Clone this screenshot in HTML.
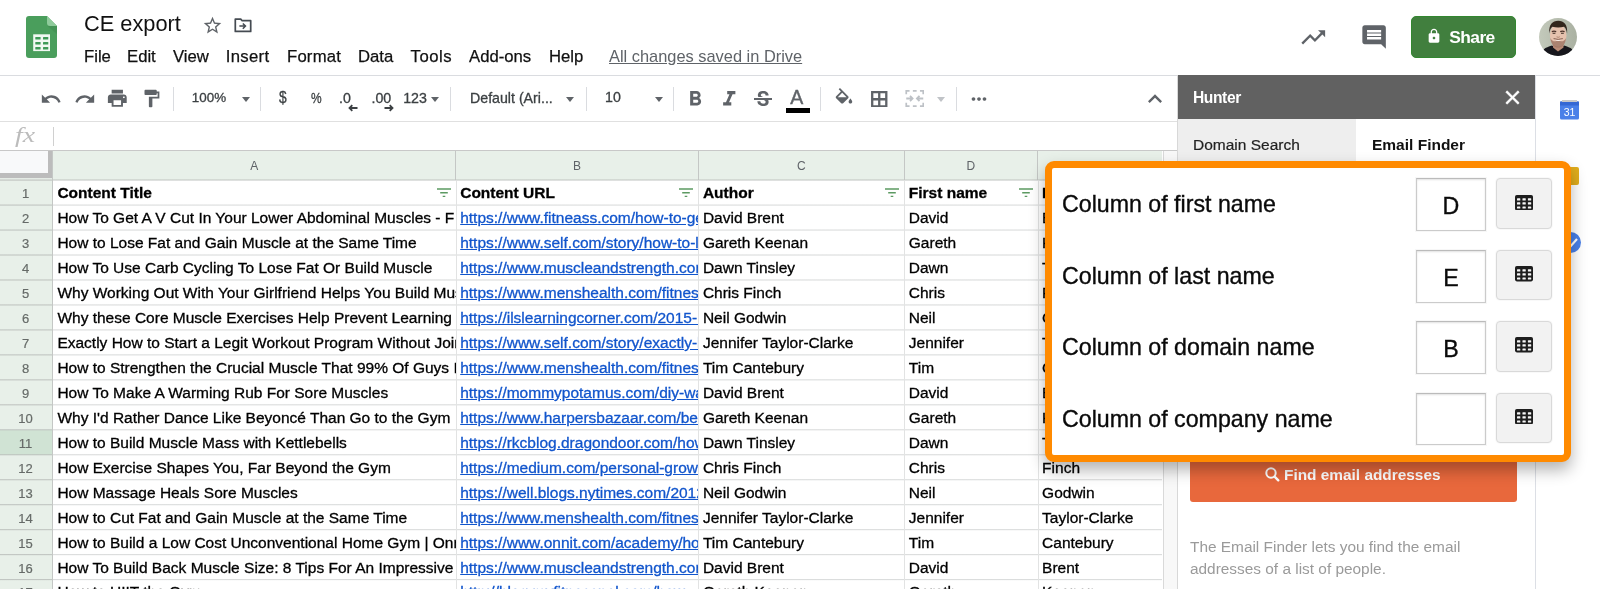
<!DOCTYPE html>
<html><head><meta charset="utf-8"><title>CE export</title>
<style>
html,body{margin:0;padding:0}
body{width:1600px;height:589px;overflow:hidden;position:relative;background:#fff;font-family:"Liberation Sans",sans-serif;color:#000}
.t{position:absolute;white-space:nowrap;line-height:20px;margin-top:-10px}
.ab{position:absolute}
svg{position:absolute;display:block}
/* header */
#hdr{position:absolute;left:0;top:0;width:1600px;height:75px;border-bottom:1px solid #dadce0;background:#fff}
.menu{font-size:16.7px;color:#111;top:56.7px;-webkit-text-stroke:.25px #111}
/* toolbar */
#tb{position:absolute;left:0;top:76px;width:1177px;height:45px;border-bottom:1px solid #e0e0e0;background:#fff}
.sep{position:absolute;top:10.6px;width:1px;height:24px;background:#dadce0}
.tt{font-size:14.2px;color:#3c4043;top:22px;-webkit-text-stroke:0.3px #3c4043}
.dd{position:absolute;width:0;height:0;border-left:4.5px solid transparent;border-right:4.5px solid transparent;border-top:5px solid #5f6368;top:21px}
/* formula */
#fb{position:absolute;left:0;top:122px;width:1177px;height:28px;border-bottom:1px solid #c8c8c8;background:#fff}
/* grid */
#grid{position:absolute;left:0;top:0;width:1163px;height:589px;overflow:hidden}
.ch{position:absolute;top:151px;background:#e8f0e9;border-right:1px solid #c4c7c5;box-sizing:border-box;height:29px;text-align:center;font-size:12px;color:#5f6368;line-height:30px}
.rh{position:absolute;left:0;width:52.4px;background:#e8f0e9;border-right:1px solid #c4c7c5;box-sizing:content-box;text-align:center;font-size:13px;color:#666b68;line-height:25.6px;height:25px}
.rh span{position:relative;left:-.6px;top:1px;-webkit-text-stroke:.2px #666b68}
.rh.sel{background:#d0e3d4}
.hl{position:absolute;height:2px}
.vl{position:absolute;top:180.5px;width:1px;height:420px;background:#e2e3e3}
.c{position:absolute;height:24px;line-height:25px;font-size:15.5px;white-space:nowrap;overflow:hidden;padding-left:3.5px;box-sizing:border-box;color:#000;-webkit-text-stroke:.3px #000}
.c.b{font-weight:bold}
.c u{color:#1155cc;text-decoration:underline;-webkit-text-stroke:.3px #1155cc}
.flt{position:absolute}
.pl{left:1062px;font-size:23.2px;color:#0a0a0a;-webkit-text-stroke:.35px #0a0a0a;line-height:30px;margin-top:-15px}
.pin{position:absolute;left:1415.7px;width:70.6px;height:52.6px;box-sizing:border-box;border:1px solid #cbcbcb;border-top-color:#bbbbbb;box-shadow:inset 0 1px 2px rgba(0,0,0,.12),0 0 0 1px rgba(0,0,0,.03);background:#fff;text-align:center;font-size:23.200px;line-height:54.6px;color:#0a0a0a;-webkit-text-stroke:.35px #0a0a0a}
.pbt{position:absolute;left:1496px;width:56px;height:50.3px;box-sizing:border-box;border:1px solid #d9d9d9;border-radius:4px;background:#f2f2f2;box-shadow:0 0 0 1px rgba(0,0,0,.025)}
.gi{left:1515.2px;width:18px;height:15.4px}
#all{position:absolute;left:0;top:0;width:1600px;height:589px;overflow:hidden;will-change:transform}

</style></head>
<body>
<div id="all">
<div id="hdr">
  <!-- sheets icon -->
  <svg style="left:26px;top:16px" width="31" height="42" viewBox="0 0 31 42">
    <path d="M3 0h18l10 10v29a3 3 0 0 1-3 3H3a3 3 0 0 1-3-3V3a3 3 0 0 1 3-3z" fill="#4a9e5c"/>
    <path d="M21 0l10 10H24a3 3 0 0 1-3-3z" fill="#8fcb9b"/>
    <path d="M21.5 10H31v8z" fill="#3f8a50" opacity=".55"/>
    <rect x="7.200" y="18.300" width="16.800" height="16.800" fill="#f1f8f2"/><g fill="#3f9a57"><rect x="9.3" y="21" width="5.3" height="2.500" rx=".5"/><rect x="17" y="21" width="5.3" height="2.500" rx=".5"/><rect x="9.3" y="26.1" width="5.3" height="2.500" rx=".5"/><rect x="17" y="26.1" width="5.3" height="2.500" rx=".5"/><rect x="9.3" y="31.1" width="5.3" height="2.500" rx=".5"/><rect x="17" y="31.1" width="5.3" height="2.500" rx=".5"/></g>
  </svg>
  <div class="t" style="left:84px;top:24px;font-size:21.8px;color:#111;line-height:28px;margin-top:-14px">CE export</div>
  <svg style="left:202.3px;top:14.6px" width="21" height="21" viewBox="0 0 24 24"><path fill="#5f6368" d="M22 9.24l-7.19-.62L12 2 9.19 8.63 2 9.24l5.46 4.73L5.82 21 12 17.27 18.18 21l-1.63-7.03L22 9.24zM12 15.4l-3.76 2.27 1-4.28-3.32-2.88 4.38-.38L12 6.1l1.71 4.04 4.38.38-3.32 2.88 1 4.28L12 15.4z"/></svg>
  <svg style="left:234.2px;top:18px" width="18" height="14.5" viewBox="0 0 19 16"><path d="M1 1.2h6l1.6 1.8H18v11.8H1z" fill="none" stroke="#454b52" stroke-width="1.900" stroke-linejoin="round"/><path d="M5.500 8.900h6.200M9.300 6l2.900 2.900-2.900 2.900" fill="none" stroke="#454b52" stroke-width="1.700"/></svg>
  <div class="t menu" style="left:84px">File</div>
  <div class="t menu" style="left:127px">Edit</div>
  <div class="t menu" style="left:173px">View</div>
  <div class="t menu" style="left:225.8px;letter-spacing:.3px">Insert</div>
  <div class="t menu" style="left:287px;letter-spacing:.2px">Format</div>
  <div class="t menu" style="left:358px">Data</div>
  <div class="t menu" style="left:410.6px;letter-spacing:.5px">Tools</div>
  <div class="t menu" style="left:469px">Add-ons</div>
  <div class="t menu" style="left:549px">Help</div>
  <div class="t" style="left:609px;top:56px;font-size:16.4px;color:#5f6368;text-decoration:underline">All changes saved in Drive</div>
  <!-- right side -->
  <svg style="left:1299.3px;top:22.6px" width="28.500" height="28.500" viewBox="0 0 24 24"><path fill="#5f6368" d="M16 6l2.29 2.29-4.88 4.88-4-4L2 16.59 3.41 18l6-6 4 4 6.3-6.29L22 12V6z"/></svg>
  <svg style="left:1359.7px;top:22.8px" width="28.200" height="28.200" viewBox="0 0 24 24"><path fill="#5f6368" d="M20 2H4c-1.1 0-2 .9-2 2v12c0 1.1.9 2 2 2h14l4 4V4c0-1.1-.9-2-2-2zm-2 12H6v-2h12v2zm0-3H6V9h12v2zm0-3H6V6h12v2z"/></svg>
  <div class="ab" style="left:1411px;top:15.500px;width:104.500px;height:42.500px;border-radius:5px;background:#417f3e;box-sizing:border-box;border:1px solid #32872f"></div>
  <svg style="left:1426px;top:28px" width="16" height="16" viewBox="0 0 24 24"><path fill="#fff" d="M18 8h-1V6c0-2.76-2.24-5-5-5S7 3.240 7 6v2H6c-1.100 0-2 .9-2 2v10c0 1.100.9 2 2 2h12c1.100 0 2-.9 2-2V10c0-1.100-.9-2-2-2zm-6 9c-1.100 0-2-.9-2-2s.9-2 2-2 2 .9 2 2-.9 2-2 2zm3.100-9H8.900V6c0-1.710 1.390-3.100 3.100-3.100 1.710 0 3.100 1.390 3.100 3.100v2z"/></svg>
  <div class="t" style="left:1449.3px;top:37px;font-size:17.4px;font-weight:bold;color:#fff;letter-spacing:-0.6px">Share</div>
  <!-- avatar -->
  <svg style="left:1539.3px;top:18px" width="38" height="38" viewBox="0 0 38 38">
    <defs><clipPath id="av"><circle cx="19" cy="19" r="19"/></clipPath><filter id="bl" x="-20%" y="-20%" width="140%" height="140%"><feGaussianBlur stdDeviation="0.75"/></filter>
    <linearGradient id="abg" x1="0" x2="1"><stop offset="0" stop-color="#c3c9bb"/><stop offset="1" stop-color="#aab1a2"/></linearGradient></defs>
    <g clip-path="url(#av)">
      <rect width="38" height="38" fill="url(#abg)"/>
      <g filter="url(#bl)">
      <path d="M2 38c0-6 4-8.500 11-10.500l6 4 6-4c7 2 11 4.500 11 10.500z" fill="#19191b"/>
      <path d="M14 25h10.500v4.500L19 33.500l-5-4z" fill="#b98b77"/>
      <ellipse cx="19.200" cy="17.500" rx="8.300" ry="11.300" fill="#e6c2ae"/>
      <path d="M11.300 20c.8 6.500 3.900 9.600 7.900 9.600s7.100-3.100 7.900-9.600c-1.300 2.600-3.500 3.600-5 3.300-1.700-.8-4.100-.8-5.800 0-1.500.3-3.700-.700-5-3.300z" fill="#9c7362" opacity=".8"/>
      <path d="M10.300 15.500C9.500 6.500 13.500 2.800 19.200 2.800s9.700 3.700 8.900 12.700c-.6-3.600-1.600-5.800-3.100-6.700-3.500.9-8.100.9-11.600 0-1.500.9-2.500 3.100-3.100 6.700z" fill="#33261f"/>
      <path d="M12.800 13.600q2.200-.9 4.400 0M21.200 13.600q2.200-.9 4.400 0" stroke="#4a3129" stroke-width="1.200" fill="none"/><path d="M13.600 15.300h2.800M22 15.300h2.800" stroke="#3a2820" stroke-width="1.100"/>
      <path d="M15.400 21.200q3.800 3.400 7.600 0q-3.800 1-7.600 0z" fill="#fbf3ee"/>
      <path d="M14.600 20.600q4.600 1.600 9.200 0" stroke="#7a5244" stroke-width=".9" fill="none"/><path d="M17.600 18.800q1.600 1 3.200 0" stroke="#a87c69" stroke-width=".9" fill="none"/>
      </g>
    </g>
  </svg>
</div>

<div id="tb">
  <svg style="left:39.8px;top:11.500px" width="22" height="22" viewBox="0 0 24 24"><path fill="#5f6368" d="M12.500 8c-2.650 0-5.050.99-6.900 2.600L2 7v9h9l-3.620-3.620c1.390-1.160 3.160-1.880 5.120-1.880 3.540 0 6.550 2.310 7.600 5.500l2.370-.78C21.080 11.030 17.150 8 12.500 8z"/></svg>
  <svg style="left:73.500px;top:11.500px" width="22" height="22" viewBox="0 0 24 24"><path fill="#5f6368" d="M18.400 10.600C16.550 8.990 14.150 8 11.500 8c-4.650 0-8.580 3.030-9.960 7.220L3.900 16c1.050-3.190 4.050-5.500 7.600-5.500 1.950 0 3.730.72 5.120 1.880L13 16h9V7l-3.600 3.600z"/></svg>
  <svg style="left:106.200px;top:11.200px" width="22.600" height="22.600" viewBox="0 0 24 24"><path fill="#5f6368" d="M19 8H5c-1.660 0-3 1.340-3 3v6h4v4h12v-4h4v-6c0-1.660-1.340-3-3-3zm-3 11H8v-5h8v5zm3-7c-.55 0-1-.45-1-1s.45-1 1-1 1 .45 1 1-.45 1-1 1zm-1-9H6v4h12V3z"/></svg>
  <svg style="left:141px;top:12px" width="21" height="21" viewBox="0 0 24 24"><path fill="#5f6368" d="M18 4V3c0-.55-.45-1-1-1H5c-.55 0-1 .45-1 1v4c0 .55.45 1 1 1h12c.55 0 1-.45 1-1V6h1v4H9v11c0 .55.45 1 1 1h2c.55 0 1-.45 1-1v-9h8V4h-3z"/></svg>
  <div class="sep" style="left:173px"></div>
  <div class="t tt" style="left:191.8px;top:22px;font-size:13.4px">100%</div>
  <div class="dd" style="left:242px"></div>
  <div class="sep" style="left:260px"></div>
  <div class="t tt" style="left:279px;font-size:16px;transform:scaleX(.86);transform-origin:0 50%">$</div>
  <div class="t tt" style="left:311.3px;font-size:14.6px;transform:scaleX(.82);transform-origin:0 50%">%</div>
  <div class="t tt" style="left:339px;top:22px">.0</div>
  <svg style="left:348px;top:27.5px" width="10" height="8" viewBox="0 0 10 8"><path d="M9.500 4H2M4.300 1.200L1.500 4l2.800 2.800" stroke="#3c4043" stroke-width="1.800" fill="none"/></svg>
  <div class="t tt" style="left:371.5px;top:22px">.00</div>
  <svg style="left:383.5px;top:27.5px" width="10" height="8" viewBox="0 0 10 8"><path d="M.5 4H8M5.700 1.200L8.500 4 5.700 6.800" stroke="#3c4043" stroke-width="1.800" fill="none"/></svg>
  <div class="t tt" style="left:403.2px">123</div>
  <div class="dd" style="left:430.5px;border-left-width:4px;border-right-width:4px"></div>
  <div class="sep" style="left:450px"></div>
  <div class="t tt" style="left:470px">Default (Ari...</div>
  <div class="dd" style="left:566px"></div>
  <div class="sep" style="left:586px"></div>
  <div class="t tt" style="left:605px;top:21px">10</div>
  <div class="dd" style="left:655px"></div>
  <div class="sep" style="left:673px"></div>
  <svg style="left:683.3px;top:11.3px" width="24.500" height="24.500" viewBox="0 0 24 24"><path fill="#5f6368" d="M15.600 10.790c.97-.67 1.650-1.770 1.650-2.790 0-2.260-1.750-4-4-4H7v14h7.040c2.090 0 3.710-1.700 3.710-3.790 0-1.520-.86-2.820-2.150-3.420zM10 6.500h3c.83 0 1.500.67 1.500 1.500s-.67 1.500-1.500 1.500h-3v-3zm3.500 9H10v-3h3.500c.83 0 1.500.67 1.500 1.500s-.67 1.500-1.500 1.500z"/></svg>
  <svg style="left:716.5px;top:11.3px" width="24.500" height="24.500" viewBox="0 0 24 24"><path fill="#5f6368" d="M10 4v3h2.210l-3.420 8H6v3h8v-3h-2.210l3.420-8H18V4z"/></svg>
  <svg style="left:750.5px;top:11.8px" width="24" height="24" viewBox="0 0 24 24"><path fill="#5f6368" d="M7.240 8.750c-.26-.48-.39-1.030-.39-1.670 0-.61.130-1.160.4-1.670.26-.5.630-.93 1.110-1.290.48-.35 1.050-.63 1.700-.83.66-.19 1.390-.29 2.180-.29.810 0 1.540.11 2.210.34.660.22 1.230.54 1.690.94.470.4.830.88 1.080 1.430.25.550.38 1.150.38 1.810h-3.010c0-.31-.05-.59-.15-.85-.09-.27-.24-.49-.44-.68-.2-.19-.45-.33-.75-.44-.3-.1-.66-.16-1.060-.16-.39 0-.74.040-1.030.13-.29.090-.53.210-.72.360-.19.160-.34.340-.44.550-.1.210-.15.430-.15.660 0 .48.250.88.740 1.210.38.250.77.480 1.410.7H7.390c-.05-.08-.11-.17-.15-.25zM21 12v-2H3v2h9.620c.18.070.4.140.55.2.37.170.66.340.87.510.21.170.35.360.43.570.07.2.11.430.11.690 0 .23-.05.45-.14.660-.09.2-.23.380-.42.530-.19.150-.42.260-.71.350-.29.080-.63.130-1.010.13-.43 0-.83-.04-1.180-.13s-.66-.23-.91-.42c-.25-.19-.45-.44-.59-.75-.14-.31-.25-.76-.25-1.210H6.400c0 .55.080 1.130.24 1.580.16.450.37.850.65 1.210.28.350.6.660.98.920.37.260.78.480 1.220.65.440.17.900.3 1.380.39.480.08.960.13 1.440.13.800 0 1.530-.09 2.180-.28s1.210-.45 1.670-.79c.46-.34.820-.77 1.070-1.270s.38-1.070.38-1.710c0-.6-.1-1.140-.31-1.610-.05-.11-.11-.23-.17-.33H21z"/></svg>
  <div class="t" style="left:790.3px;top:20.6px;font-size:19.500px;color:#5f6368;-webkit-text-stroke:0.4px #5f6368">A</div>
  <div class="ab" style="left:785.5px;top:32px;width:24.500px;height:4.700px;background:#000"></div>
  <div class="sep" style="left:819.500px"></div>
  <svg style="left:832.5px;top:12px" width="22" height="22" viewBox="0 0 24 24"><path fill="#5f6368" d="M16.560 8.940L7.620 0 6.210 1.410l2.380 2.380-5.150 5.150c-.59.590-.59 1.540 0 2.120l5.500 5.500c.29.290.68.440 1.060.44s.77-.15 1.060-.44l5.500-5.500c.59-.58.59-1.530 0-2.120zM5.210 10L10 5.210 14.790 10H5.210zM19 11.500s-2 2.170-2 3.500c0 1.100.9 2 2 2s2-.9 2-2c0-1.330-2-3.500-2-3.500z"/></svg>
  <svg style="left:871px;top:14.500px" width="16.500" height="16.500" viewBox="0 0 16.500 16.500"><path d="M1.200 1.200h14.100v14.100H1.200zM8.250 1.200v14.100M1.200 8.250h14.100" fill="none" stroke="#5f6368" stroke-width="2.300"/></svg>
  <svg style="left:904.8px;top:14px" width="19.500" height="17" viewBox="0 0 20 18"><path d="M1 4.500V1h3.500M8 1h4M15.500 1H19v3.500M1 13.500V17h3.500M8 17h4M15.500 17H19v-3.500" fill="none" stroke="#bdc1c6" stroke-width="1.800"/><path d="M1 9h6.500M5 6.300L7.700 9 5 11.700M19 9h-6.500M15 6.300L12.300 9l2.700 2.700" fill="none" stroke="#bdc1c6" stroke-width="1.900"/></svg>
  <div class="dd" style="left:937px;border-top-color:#c0c3c7"></div>
  <div class="sep" style="left:956.400px"></div>
  <svg style="left:968px;top:11.7px" width="22" height="22" viewBox="0 0 24 24"><path fill="#5f6368" d="M6 10c-1.100 0-2 .9-2 2s.9 2 2 2 2-.9 2-2-.9-2-2-2zm12 0c-1.100 0-2 .9-2 2s.9 2 2 2 2-.9 2-2-.9-2-2-2zm-6 0c-1.100 0-2 .9-2 2s.9 2 2 2 2-.9 2-2-.9-2-2-2z"/></svg>
  <svg style="left:1141px;top:9px" width="28" height="28" viewBox="0 0 24 24"><path fill="#5f6368" d="M12 8l-6 6 1.410 1.410L12 10.830l4.590 4.580L18 14z"/></svg>
</div>

<div id="fb">
  <div class="t" style="left:16px;top:13px;font-family:'Liberation Serif',serif;font-style:italic;font-size:21px;color:#bcbcbc;line-height:24px;margin-top:-12px;transform:scaleX(1.32);transform-origin:0 50%;left:15px">fx</div>
  <div class="ab" style="left:52.5px;top:4.5px;width:1px;height:19px;background:#d0d0d0"></div>
</div>
<!-- corner cell -->
<div class="ab" style="left:0;top:151px;width:52.5px;height:27px;background:#bcbcbc"></div>
<div class="ab" style="left:0;top:151px;width:47.7px;height:22.4px;background:#f8f9fa"></div>
<div class="ab" style="left:0;top:178px;width:52.4px;height:1.5px;background:#e4ebe5"></div><div class="ab" style="left:52.4px;top:151px;width:1px;height:29px;background:#c4c7c5"></div>

<div id="grid" style="width:1162.4px">
<div class="ch" style="left:53.4px;width:402.8px"><span>A</span></div>
<div class="ch" style="left:456.2px;width:242.7px"><span>B</span></div>
<div class="ch" style="left:698.9px;width:205.9px"><span>C</span></div>
<div class="ch" style="left:904.8px;width:133.3px"><span>D</span></div>
<div class="ch" style="left:1038.1px;width:158px"><span>E</span></div>
<div class="rh" style="top:180.10px"><span>1</span></div>
<div class="c b" style="left:53.9px;top:180px;width:401.8px">Content Title</div>
<svg class="flt" style="left:436.7px;top:188.1px" width="14" height="11" viewBox="0 0 14 11"><path d="M0 1h14M3.2 4.8h7.600M5.700 8.400h2.600" stroke="#5c9a62" stroke-width="1.400" fill="none"/></svg>
<div class="c b" style="left:456.7px;top:180px;width:241.7px">Content URL</div>
<svg class="flt" style="left:679.4px;top:188.1px" width="14" height="11" viewBox="0 0 14 11"><path d="M0 1h14M3.2 4.8h7.600M5.700 8.400h2.600" stroke="#5c9a62" stroke-width="1.400" fill="none"/></svg>
<div class="c b" style="left:699.4px;top:180px;width:204.9px">Author</div>
<svg class="flt" style="left:885.3px;top:188.1px" width="14" height="11" viewBox="0 0 14 11"><path d="M0 1h14M3.2 4.8h7.600M5.700 8.400h2.600" stroke="#5c9a62" stroke-width="1.400" fill="none"/></svg>
<div class="c b" style="left:905.3px;top:180px;width:132.3px">First name</div>
<svg class="flt" style="left:1018.6px;top:188.1px" width="14" height="11" viewBox="0 0 14 11"><path d="M0 1h14M3.2 4.8h7.600M5.700 8.400h2.600" stroke="#5c9a62" stroke-width="1.400" fill="none"/></svg>
<div class="c b" style="left:1038.6px;top:180px;width:123.8px">Last name</div>
<div class="rh" style="top:205.07px"><span>2</span></div>
<div class="c" style="left:53.9px;top:205px;width:401.8px">How To Get A V Cut In Your Lower Abdominal Muscles - F</div>
<div class="c" style="left:456.7px;top:205px;width:241.7px"><u>https://www.fitneass.com/how-to-get-a-v-cut</u></div>
<div class="c" style="left:699.4px;top:205px;width:204.9px">David Brent</div>
<div class="c" style="left:905.3px;top:205px;width:132.3px">David</div>
<div class="c" style="left:1038.6px;top:205px;width:123.8px">Brent</div>
<div class="rh" style="top:230.04px"><span>3</span></div>
<div class="c" style="left:53.9px;top:230px;width:401.8px">How to Lose Fat and Gain Muscle at the Same Time</div>
<div class="c" style="left:456.7px;top:230px;width:241.7px"><u>https://www.self.com/story/how-to-lose-fat</u></div>
<div class="c" style="left:699.4px;top:230px;width:204.9px">Gareth Keenan</div>
<div class="c" style="left:905.3px;top:230px;width:132.3px">Gareth</div>
<div class="c" style="left:1038.6px;top:230px;width:123.8px">Keenan</div>
<div class="rh" style="top:255.01px"><span>4</span></div>
<div class="c" style="left:53.9px;top:255px;width:401.8px">How To Use Carb Cycling To Lose Fat Or Build Muscle</div>
<div class="c" style="left:456.7px;top:255px;width:241.7px"><u>https://www.muscleandstrength.com/articles</u></div>
<div class="c" style="left:699.4px;top:255px;width:204.9px">Dawn Tinsley</div>
<div class="c" style="left:905.3px;top:255px;width:132.3px">Dawn</div>
<div class="c" style="left:1038.6px;top:255px;width:123.8px">Tinsley</div>
<div class="rh" style="top:279.98px"><span>5</span></div>
<div class="c" style="left:53.9px;top:280px;width:401.8px">Why Working Out With Your Girlfriend Helps You Build Muscle</div>
<div class="c" style="left:456.7px;top:280px;width:241.7px"><u>https://www.menshealth.com/fitness/a19</u></div>
<div class="c" style="left:699.4px;top:280px;width:204.9px">Chris Finch</div>
<div class="c" style="left:905.3px;top:280px;width:132.3px">Chris</div>
<div class="c" style="left:1038.6px;top:280px;width:123.8px">Finch</div>
<div class="rh" style="top:304.95px"><span>6</span></div>
<div class="c" style="left:53.9px;top:305px;width:401.8px">Why these Core Muscle Exercises Help Prevent Learning</div>
<div class="c" style="left:456.7px;top:305px;width:241.7px"><u>https://ilslearningcorner.com/2015-11</u></div>
<div class="c" style="left:699.4px;top:305px;width:204.9px">Neil Godwin</div>
<div class="c" style="left:905.3px;top:305px;width:132.3px">Neil</div>
<div class="c" style="left:1038.6px;top:305px;width:123.8px">Godwin</div>
<div class="rh" style="top:329.92px"><span>7</span></div>
<div class="c" style="left:53.9px;top:330px;width:401.8px">Exactly How to Start a Legit Workout Program Without Joining</div>
<div class="c" style="left:456.7px;top:330px;width:241.7px"><u>https://www.self.com/story/exactly-how</u></div>
<div class="c" style="left:699.4px;top:330px;width:204.9px">Jennifer Taylor-Clarke</div>
<div class="c" style="left:905.3px;top:330px;width:132.3px">Jennifer</div>
<div class="c" style="left:1038.6px;top:330px;width:123.8px">Taylor-Clarke</div>
<div class="rh" style="top:354.89px"><span>8</span></div>
<div class="c" style="left:53.9px;top:355px;width:401.8px">How to Strengthen the Crucial Muscle That 99% Of Guys Ignore</div>
<div class="c" style="left:456.7px;top:355px;width:241.7px"><u>https://www.menshealth.com/fitness/a19</u></div>
<div class="c" style="left:699.4px;top:355px;width:204.9px">Tim Cantebury</div>
<div class="c" style="left:905.3px;top:355px;width:132.3px">Tim</div>
<div class="c" style="left:1038.6px;top:355px;width:123.8px">Cantebury</div>
<div class="rh" style="top:379.86px"><span>9</span></div>
<div class="c" style="left:53.9px;top:380px;width:401.8px">How To Make A Warming Rub For Sore Muscles</div>
<div class="c" style="left:456.7px;top:380px;width:241.7px"><u>https://mommypotamus.com/diy-warming</u></div>
<div class="c" style="left:699.4px;top:380px;width:204.9px">David Brent</div>
<div class="c" style="left:905.3px;top:380px;width:132.3px">David</div>
<div class="c" style="left:1038.6px;top:380px;width:123.8px">Brent</div>
<div class="rh" style="top:404.83px"><span>10</span></div>
<div class="c" style="left:53.9px;top:405px;width:401.8px">Why I'd Rather Dance Like Beyoncé Than Go to the Gym</div>
<div class="c" style="left:456.7px;top:405px;width:241.7px"><u>https://www.harpersbazaar.com/beauty</u></div>
<div class="c" style="left:699.4px;top:405px;width:204.9px">Gareth Keenan</div>
<div class="c" style="left:905.3px;top:405px;width:132.3px">Gareth</div>
<div class="c" style="left:1038.6px;top:405px;width:123.8px">Keenan</div>
<div class="rh sel" style="top:429.80px"><span>11</span></div>
<div class="c" style="left:53.9px;top:430px;width:401.8px">How to Build Muscle Mass with Kettlebells</div>
<div class="c" style="left:456.7px;top:430px;width:241.7px"><u>https://rkcblog.dragondoor.com/how-to</u></div>
<div class="c" style="left:699.4px;top:430px;width:204.9px">Dawn Tinsley</div>
<div class="c" style="left:905.3px;top:430px;width:132.3px">Dawn</div>
<div class="c" style="left:1038.6px;top:430px;width:123.8px">Tinsley</div>
<div class="rh" style="top:454.77px"><span>12</span></div>
<div class="c" style="left:53.9px;top:455px;width:401.8px">How Exercise Shapes You, Far Beyond the Gym</div>
<div class="c" style="left:456.7px;top:455px;width:241.7px"><u>https://medium.com/personal-growth</u></div>
<div class="c" style="left:699.4px;top:455px;width:204.9px">Chris Finch</div>
<div class="c" style="left:905.3px;top:455px;width:132.3px">Chris</div>
<div class="c" style="left:1038.6px;top:455px;width:123.8px">Finch</div>
<div class="rh" style="top:479.74px"><span>13</span></div>
<div class="c" style="left:53.9px;top:480px;width:401.8px">How Massage Heals Sore Muscles</div>
<div class="c" style="left:456.7px;top:480px;width:241.7px"><u>https://well.blogs.nytimes.com/2012/02</u></div>
<div class="c" style="left:699.4px;top:480px;width:204.9px">Neil Godwin</div>
<div class="c" style="left:905.3px;top:480px;width:132.3px">Neil</div>
<div class="c" style="left:1038.6px;top:480px;width:123.8px">Godwin</div>
<div class="rh" style="top:504.71px"><span>14</span></div>
<div class="c" style="left:53.9px;top:505px;width:401.8px">How to Cut Fat and Gain Muscle at the Same Time</div>
<div class="c" style="left:456.7px;top:505px;width:241.7px"><u>https://www.menshealth.com/fitness/a19</u></div>
<div class="c" style="left:699.4px;top:505px;width:204.9px">Jennifer Taylor-Clarke</div>
<div class="c" style="left:905.3px;top:505px;width:132.3px">Jennifer</div>
<div class="c" style="left:1038.6px;top:505px;width:123.8px">Taylor-Clarke</div>
<div class="rh" style="top:529.68px"><span>15</span></div>
<div class="c" style="left:53.9px;top:530px;width:401.8px">How to Build a Low Cost Unconventional Home Gym | Onnit</div>
<div class="c" style="left:456.7px;top:530px;width:241.7px"><u>https://www.onnit.com/academy/how</u></div>
<div class="c" style="left:699.4px;top:530px;width:204.9px">Tim Cantebury</div>
<div class="c" style="left:905.3px;top:530px;width:132.3px">Tim</div>
<div class="c" style="left:1038.6px;top:530px;width:123.8px">Cantebury</div>
<div class="rh" style="top:554.65px"><span>16</span></div>
<div class="c" style="left:53.9px;top:555px;width:401.8px">How To Build Back Muscle Size: 8 Tips For An Impressive</div>
<div class="c" style="left:456.7px;top:555px;width:241.7px"><u>https://www.muscleandstrength.com/articles</u></div>
<div class="c" style="left:699.4px;top:555px;width:204.9px">David Brent</div>
<div class="c" style="left:905.3px;top:555px;width:132.3px">David</div>
<div class="c" style="left:1038.6px;top:555px;width:123.8px">Brent</div>
<div class="rh" style="top:578.62px"><span>17</span></div>
<div class="c" style="left:53.9px;top:579px;width:401.8px">How to HIIT the Gym</div>
<div class="c" style="left:456.7px;top:579px;width:241.7px"><u>http://blog.myfitnesspal.com/how</u></div>
<div class="c" style="left:699.4px;top:579px;width:204.9px">Gareth Keenan</div>
<div class="c" style="left:905.3px;top:579px;width:132.3px">Gareth</div>
<div class="c" style="left:1038.6px;top:579px;width:123.8px">Keenan</div>
<div class="hl" style="left:53.4px;width:1110px;top:179px;background:linear-gradient(rgba(190,194,191,0.500) 0 1px,rgba(190,194,191,0.500) 1px 2px)"></div>
<div class="hl" style="left:0px;width:52.4px;top:179px;background:linear-gradient(rgba(188,192,189,0.400) 0 1px,rgba(188,192,189,0.600) 1px 2px)"></div>
<div class="hl" style="left:53.4px;width:1110px;top:204px;background:linear-gradient(rgba(214,216,216,0.430) 0 1px,rgba(214,216,216,0.570) 1px 2px)"></div>
<div class="hl" style="left:0px;width:52.4px;top:204px;background:linear-gradient(rgba(188,192,189,0.430) 0 1px,rgba(188,192,189,0.570) 1px 2px)"></div>
<div class="hl" style="left:53.4px;width:1110px;top:229px;background:linear-gradient(rgba(214,216,216,0.460) 0 1px,rgba(214,216,216,0.540) 1px 2px)"></div>
<div class="hl" style="left:0px;width:52.4px;top:229px;background:linear-gradient(rgba(188,192,189,0.460) 0 1px,rgba(188,192,189,0.540) 1px 2px)"></div>
<div class="hl" style="left:53.4px;width:1110px;top:254px;background:linear-gradient(rgba(214,216,216,0.490) 0 1px,rgba(214,216,216,0.510) 1px 2px)"></div>
<div class="hl" style="left:0px;width:52.4px;top:254px;background:linear-gradient(rgba(188,192,189,0.490) 0 1px,rgba(188,192,189,0.510) 1px 2px)"></div>
<div class="hl" style="left:53.4px;width:1110px;top:279px;background:linear-gradient(rgba(214,216,216,0.520) 0 1px,rgba(214,216,216,0.480) 1px 2px)"></div>
<div class="hl" style="left:0px;width:52.4px;top:279px;background:linear-gradient(rgba(188,192,189,0.520) 0 1px,rgba(188,192,189,0.480) 1px 2px)"></div>
<div class="hl" style="left:53.4px;width:1110px;top:304px;background:linear-gradient(rgba(214,216,216,0.550) 0 1px,rgba(214,216,216,0.450) 1px 2px)"></div>
<div class="hl" style="left:0px;width:52.4px;top:304px;background:linear-gradient(rgba(188,192,189,0.550) 0 1px,rgba(188,192,189,0.450) 1px 2px)"></div>
<div class="hl" style="left:53.4px;width:1110px;top:329px;background:linear-gradient(rgba(214,216,216,0.580) 0 1px,rgba(214,216,216,0.420) 1px 2px)"></div>
<div class="hl" style="left:0px;width:52.4px;top:329px;background:linear-gradient(rgba(188,192,189,0.580) 0 1px,rgba(188,192,189,0.420) 1px 2px)"></div>
<div class="hl" style="left:53.4px;width:1110px;top:354px;background:linear-gradient(rgba(214,216,216,0.610) 0 1px,rgba(214,216,216,0.390) 1px 2px)"></div>
<div class="hl" style="left:0px;width:52.4px;top:354px;background:linear-gradient(rgba(188,192,189,0.610) 0 1px,rgba(188,192,189,0.390) 1px 2px)"></div>
<div class="hl" style="left:53.4px;width:1110px;top:379px;background:linear-gradient(rgba(214,216,216,0.640) 0 1px,rgba(214,216,216,0.360) 1px 2px)"></div>
<div class="hl" style="left:0px;width:52.4px;top:379px;background:linear-gradient(rgba(188,192,189,0.640) 0 1px,rgba(188,192,189,0.360) 1px 2px)"></div>
<div class="hl" style="left:53.4px;width:1110px;top:404px;background:linear-gradient(rgba(214,216,216,0.670) 0 1px,rgba(214,216,216,0.330) 1px 2px)"></div>
<div class="hl" style="left:0px;width:52.4px;top:404px;background:linear-gradient(rgba(188,192,189,0.670) 0 1px,rgba(188,192,189,0.330) 1px 2px)"></div>
<div class="hl" style="left:53.4px;width:1110px;top:429px;background:linear-gradient(rgba(214,216,216,0.700) 0 1px,rgba(214,216,216,0.300) 1px 2px)"></div>
<div class="hl" style="left:0px;width:52.4px;top:429px;background:linear-gradient(rgba(188,192,189,0.700) 0 1px,rgba(188,192,189,0.300) 1px 2px)"></div>
<div class="hl" style="left:53.4px;width:1110px;top:454px;background:linear-gradient(rgba(214,216,216,0.730) 0 1px,rgba(214,216,216,0.270) 1px 2px)"></div>
<div class="hl" style="left:0px;width:52.4px;top:454px;background:linear-gradient(rgba(188,192,189,0.730) 0 1px,rgba(188,192,189,0.270) 1px 2px)"></div>
<div class="hl" style="left:53.4px;width:1110px;top:479px;background:linear-gradient(rgba(214,216,216,0.760) 0 1px,rgba(214,216,216,0.240) 1px 2px)"></div>
<div class="hl" style="left:0px;width:52.4px;top:479px;background:linear-gradient(rgba(188,192,189,0.760) 0 1px,rgba(188,192,189,0.240) 1px 2px)"></div>
<div class="hl" style="left:53.4px;width:1110px;top:504px;background:linear-gradient(rgba(214,216,216,0.790) 0 1px,rgba(214,216,216,0.210) 1px 2px)"></div>
<div class="hl" style="left:0px;width:52.4px;top:504px;background:linear-gradient(rgba(188,192,189,0.790) 0 1px,rgba(188,192,189,0.210) 1px 2px)"></div>
<div class="hl" style="left:53.4px;width:1110px;top:529px;background:linear-gradient(rgba(214,216,216,0.820) 0 1px,rgba(214,216,216,0.180) 1px 2px)"></div>
<div class="hl" style="left:0px;width:52.4px;top:529px;background:linear-gradient(rgba(188,192,189,0.820) 0 1px,rgba(188,192,189,0.180) 1px 2px)"></div>
<div class="hl" style="left:53.4px;width:1110px;top:554px;background:linear-gradient(rgba(214,216,216,0.850) 0 1px,rgba(214,216,216,0.150) 1px 2px)"></div>
<div class="hl" style="left:0px;width:52.4px;top:554px;background:linear-gradient(rgba(188,192,189,0.850) 0 1px,rgba(188,192,189,0.150) 1px 2px)"></div>
<div class="hl" style="left:53.4px;width:1110px;top:579px;background:linear-gradient(rgba(214,216,216,0.880) 0 1px,rgba(214,216,216,0.120) 1px 2px)"></div>
<div class="hl" style="left:0px;width:52.4px;top:579px;background:linear-gradient(rgba(188,192,189,0.880) 0 1px,rgba(188,192,189,0.120) 1px 2px)"></div>
<div class="vl" style="left:455.7px"></div>
<div class="vl" style="left:698.4px"></div>
<div class="vl" style="left:904.3px"></div>
<div class="vl" style="left:1037.6px"></div>
<div class="vl" style="left:1162.4px"></div>
</div>
<!-- vertical scrollbar strip -->
<div class="ab" style="left:1163px;top:151px;width:14px;height:440px;background:#f8f8f8;border-left:1px solid #d9d9d9;box-sizing:border-box"></div>
<!-- sidebar -->
<div class="ab" style="left:1177px;top:75px;width:359px;height:520px;background:#fff;border-left:1px solid #d8d8d8;border-right:1px solid #dcdfe5;box-sizing:border-box"></div>
<div class="ab" style="left:1178px;top:75px;width:357px;height:44px;background:#616161"></div>
<div class="t" style="left:1193px;top:97.6px;font-size:15.6px;font-weight:bold;color:#fff;letter-spacing:-0.4px">Hunter</div>
<svg style="left:1501.3px;top:86px" width="23" height="23" viewBox="0 0 24 24"><path fill="#fff" stroke="#fff" stroke-width=".7" d="M19 6.410L17.590 5 12 10.590 6.410 5 5 6.410 10.590 12 5 17.590 6.410 19 12 13.410 17.590 19 19 17.590 13.410 12z"/></svg>
<div class="ab" style="left:1178px;top:119px;width:178px;height:46px;background:#eeeeee"></div>
<div class="t" style="left:1193px;top:144.6px;font-size:15.5px;color:#222;-webkit-text-stroke:.2px #222">Domain Search</div>
<div class="t" style="left:1372px;top:144.6px;font-size:15.5px;font-weight:bold;color:#111">Email Finder</div>
<!-- find button -->
<div class="ab" style="left:1190px;top:440px;width:327px;height:62px;border-radius:3px;background:#e8683c"></div>
<svg style="left:1264.5px;top:467px" width="15" height="15" viewBox="0 0 15 15"><circle cx="6" cy="6" r="4.700" fill="none" stroke="#fff" stroke-width="2"/><path d="M9.600 9.600l3.700 3.700" stroke="#fff" stroke-width="2.400" stroke-linecap="round"/></svg>
<div class="t" style="left:1284px;top:475px;font-size:15.4px;font-weight:bold;color:#fff">Find email addresses</div>
<div class="t" style="left:1190px;top:547.4px;font-size:15.4px;color:#9a9a9a">The Email Finder lets you find the email</div>
<div class="t" style="left:1190px;top:569.4px;font-size:15.4px;color:#9a9a9a">addresses of a list of people.</div>
<!-- right rail -->
<svg style="left:1560px;top:100px" width="19" height="20" viewBox="0 0 19 20"><rect x="0" y="1.500" width="19" height="18" rx="1.500" fill="#4a80e8"/><rect x="0" y="1.500" width="19" height="4" fill="#3568d4"/><rect x="2" y="0" width="15" height="2" fill="#c8c8c8"/><text x="9.500" y="16" font-family="Liberation Sans" font-size="10.500" fill="#fff" text-anchor="middle">31</text></svg>
<div class="ab" style="left:1561px;top:167px;width:18px;height:18px;background:#e0ad1c;border-radius:2px"></div>
<div class="ab" style="left:1559.5px;top:232px;width:21px;height:21px;background:#4a80e8;border-radius:50%"></div>
<svg style="left:1564px;top:235.500px" width="14" height="14" viewBox="0 0 14 14"><path d="M3 8l3 3 7-8" stroke="#fff" stroke-width="2.200" fill="none"/></svg>

<!-- orange popup -->
<div class="ab" style="left:1045px;top:161px;width:526px;height:301px;box-sizing:border-box;border:7px solid #ff8a00;border-radius:9px;background:#fff;box-shadow:0 8px 16px rgba(0,0,0,.3)"></div>
<div id="pop" class="ab" style="left:0;top:0">
  <div class="t pl" style="top:204px">Column of first name</div>
  <div class="t pl" style="top:275.500px">Column of last name</div>
  <div class="t pl" style="top:347px">Column of domain name</div>
  <div class="t pl" style="top:418.500px">Column of company name</div>
  <div class="pin" style="top:178.4px">D</div>
  <div class="pin" style="top:250.1px">E</div>
  <div class="pin" style="top:321.3px">B</div>
  <div class="pin" style="top:392.8px"></div>
  <div class="pbt" style="top:178.4px"></div>
  <div class="pbt" style="top:250.1px"></div>
  <div class="pbt" style="top:321.3px"></div>
  <div class="pbt" style="top:392.8px"></div>
  <svg class="gi" style="top:194.6px"><g><rect x="0" y="0" width="18" height="15.400" rx="1.800" fill="#1e1e1e"/><g fill="#f6f6f6"><rect x="2.00" y="3.25" width="3.300" height="2.150" rx=".5"/><rect x="7.45" y="3.25" width="3.300" height="2.150" rx=".5"/><rect x="12.90" y="3.25" width="3.300" height="2.150" rx=".5"/><rect x="2.00" y="7.25" width="3.300" height="2.150" rx=".5"/><rect x="7.45" y="7.25" width="3.300" height="2.150" rx=".5"/><rect x="12.90" y="7.25" width="3.300" height="2.150" rx=".5"/><rect x="2.00" y="11.45" width="3.300" height="2.150" rx=".5"/><rect x="7.45" y="11.45" width="3.300" height="2.150" rx=".5"/><rect x="12.90" y="11.45" width="3.300" height="2.150" rx=".5"/></g></g></svg>
  <svg class="gi" style="top:266.3px"><g><rect x="0" y="0" width="18" height="15.400" rx="1.800" fill="#1e1e1e"/><g fill="#f6f6f6"><rect x="2.00" y="3.25" width="3.300" height="2.150" rx=".5"/><rect x="7.45" y="3.25" width="3.300" height="2.150" rx=".5"/><rect x="12.90" y="3.25" width="3.300" height="2.150" rx=".5"/><rect x="2.00" y="7.25" width="3.300" height="2.150" rx=".5"/><rect x="7.45" y="7.25" width="3.300" height="2.150" rx=".5"/><rect x="12.90" y="7.25" width="3.300" height="2.150" rx=".5"/><rect x="2.00" y="11.45" width="3.300" height="2.150" rx=".5"/><rect x="7.45" y="11.45" width="3.300" height="2.150" rx=".5"/><rect x="12.90" y="11.45" width="3.300" height="2.150" rx=".5"/></g></g></svg>
  <svg class="gi" style="top:337.4px"><g><rect x="0" y="0" width="18" height="15.400" rx="1.800" fill="#1e1e1e"/><g fill="#f6f6f6"><rect x="2.00" y="3.25" width="3.300" height="2.150" rx=".5"/><rect x="7.45" y="3.25" width="3.300" height="2.150" rx=".5"/><rect x="12.90" y="3.25" width="3.300" height="2.150" rx=".5"/><rect x="2.00" y="7.25" width="3.300" height="2.150" rx=".5"/><rect x="7.45" y="7.25" width="3.300" height="2.150" rx=".5"/><rect x="12.90" y="7.25" width="3.300" height="2.150" rx=".5"/><rect x="2.00" y="11.45" width="3.300" height="2.150" rx=".5"/><rect x="7.45" y="11.45" width="3.300" height="2.150" rx=".5"/><rect x="12.90" y="11.45" width="3.300" height="2.150" rx=".5"/></g></g></svg>
  <svg class="gi" style="top:409.1px"><g><rect x="0" y="0" width="18" height="15.400" rx="1.800" fill="#1e1e1e"/><g fill="#f6f6f6"><rect x="2.00" y="3.25" width="3.300" height="2.150" rx=".5"/><rect x="7.45" y="3.25" width="3.300" height="2.150" rx=".5"/><rect x="12.90" y="3.25" width="3.300" height="2.150" rx=".5"/><rect x="2.00" y="7.25" width="3.300" height="2.150" rx=".5"/><rect x="7.45" y="7.25" width="3.300" height="2.150" rx=".5"/><rect x="12.90" y="7.25" width="3.300" height="2.150" rx=".5"/><rect x="2.00" y="11.45" width="3.300" height="2.150" rx=".5"/><rect x="7.45" y="11.45" width="3.300" height="2.150" rx=".5"/><rect x="12.90" y="11.45" width="3.300" height="2.150" rx=".5"/></g></g></svg>
</div>


</div>
</body></html>
